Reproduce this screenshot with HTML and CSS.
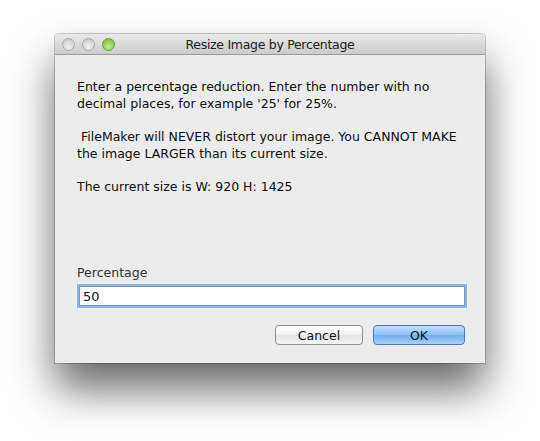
FILE: index.html
```html
<!DOCTYPE html>
<html lang="en">
<head>
    <meta charset="UTF-8">
    <title>Resize Image by Percentage</title>
    <link rel="stylesheet" href="styles.css">
</head>
<body>
    <div class="window">
        <div class="titlebar">
            <div class="lights">
                <span class="light"></span>
                <span class="light"></span>
                <span class="light green"></span>
            </div>
            <div class="title">Resize Image by Percentage</div>
        </div>

        <div class="content">
            <p>Enter a percentage reduction. Enter the number with no decimal places, for example '25' for 25%.</p>
            <p>&nbsp;FileMaker will NEVER distort your image. You CANNOT MAKE the image LARGER than its current size.</p>
            <p>The current size is W: 920 H: 1425</p>

            <div class="field">
                <label for="pct">Percentage</label>
                <input id="pct" type="text" value="50">
            </div>

            <div class="buttons">
                <button class="btn">Cancel</button>
                <button class="btn default">OK</button>
            </div>
        </div>
    </div>
</body>
</html>
```

FILE: styles.css
```css
html, body {
    height: 100%;
}
body {
    margin: 0;
    padding: 34px 0 0 55px;
    box-sizing: border-box;
    min-height: 441px;
    background-color: #fff;
    font-family: "DejaVu Sans", "Liberation Sans", sans-serif;
    color: #0c0c0c;
}
.window {
    width: 430px;
    height: 329px;
    background-color: #ececec;
    border-radius: 4px 4px 0 0;
    box-shadow: 0 0 0 1px rgba(0,0,0,0.2), 0 26px 44px rgba(0,0,0,0.6);
    display: flex;
    flex-direction: column;
}
.titlebar {
    height: 20px;
    position: relative;
    display: flex;
    align-items: center;
    background: linear-gradient(#eaeaea, #cbcbcb);
    border-bottom: 1px solid #9a9a9a;
    border-radius: 4px 4px 0 0;
}
.lights {
    display: flex;
    gap: 7px;
    padding-left: 7px;
}
.light {
    width: 13px;
    height: 13px;
    border-radius: 50%;
    box-sizing: border-box;
    border: 1px solid #a9a9a9;
    background: radial-gradient(circle at 50% 70%, #f2f2f2, #c4c4c4);
}
.light.green {
    border-color: #6a9a3e;
    background: radial-gradient(circle at 50% 70%, #c6ef8f, #6bb234);
}
.title {
    position: absolute;
    left: 0;
    right: 0;
    text-align: center;
    font-size: 12.5px;
    color: #222;
    letter-spacing: -0.3px;
}
.content {
    flex: 1;
    display: flex;
    flex-direction: column;
    padding: 24px 20px 18px 22px;
    font-size: 12.5px;
    line-height: 16.5px;
}
.content p {
    margin: 0 0 17px;
}
.field {
    margin-top: auto;
    display: flex;
    flex-direction: column;
}
.field label {
    color: #333;
    margin-bottom: 3px;
}
.field input {
    height: 18px;
    margin: 2px 0 0 2px;
    padding: 0 3px;
    border: 1px solid #7896c4;
    font: inherit;
    font-size: 13px;
    color: #111;
    background: #fff;
    outline: none;
    box-shadow: 0 0 0 2px #8db4ea;
}
.buttons {
    display: flex;
    justify-content: flex-end;
    gap: 10px;
    margin-top: 19px;
}
.btn {
    width: 88px;
    height: 20px;
    padding: 0;
    border: 1px solid #8f8f8f;
    border-radius: 4px;
    background: linear-gradient(#ffffff, #f0f0f0 50%, #e4e4e4 51%, #f4f4f4);
    font-family: inherit;
    font-size: 12.5px;
    color: #111;
}
.btn.default {
    width: 92px;
    border-color: #4d77b3;
    background: linear-gradient(#c6e0fa, #8ec0f4 50%, #72aef0 51%, #a6d2fa);
}
```
